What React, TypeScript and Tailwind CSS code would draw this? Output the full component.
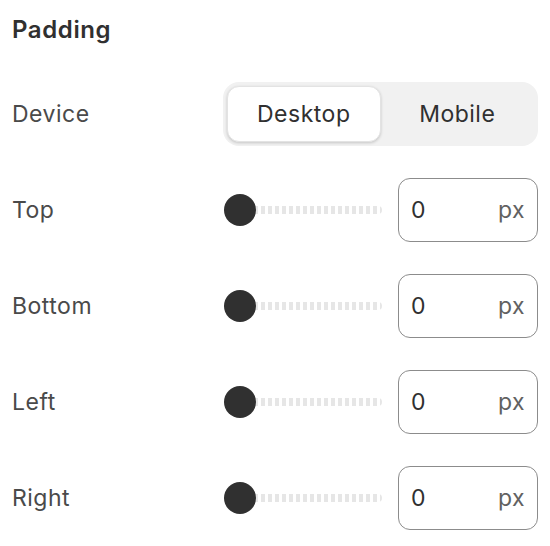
import { useState } from 'react';

const sides = ['Top', 'Bottom', 'Left', 'Right'];

function PaddingRow({ label }: { label: string }) {
  const [value, setValue] = useState('0');

  return (
    <div className="flex items-center h-16">
      <span className="w-[212px] text-[23px] tracking-[0.5px] text-[#4a4a4a]">{label}</span>
      {/* Slider */}
      <div className="relative flex items-center w-[158px] h-8">
        <div className="absolute left-4 right-0 h-2 rounded-full bg-[repeating-linear-gradient(90deg,#e6e6e6_0_4.5px,transparent_4.5px_7px)]" />
        <div className="relative w-8 h-8 rounded-full bg-[#303030]" />
      </div>
      {/* Value input */}
      <div className="ml-4 flex items-center w-[140px] h-16 px-3 rounded-xl border border-[#8c8c8c] bg-white">
        <input
          type="text"
          value={value}
          onChange={(e) => setValue(e.target.value)}
          className="w-full min-w-0 bg-transparent text-[23px] text-[#303030] focus:outline-none"
        />
        <span className="text-[23px] tracking-[0.5px] text-[#616161]">px</span>
      </div>
    </div>
  );
}

export default function App() {
  const [device, setDevice] = useState<'desktop' | 'mobile'>('desktop');

  return (
    <div className="min-h-screen bg-white px-3 pt-4 font-['Inter','Liberation_Sans',sans-serif]">
      <h2 className="text-[24px] leading-7 tracking-[0.6px] font-semibold text-[#303030]">Padding</h2>

      <div className="mt-[38px] flex flex-col gap-8">
        {/* Device toggle */}
        <div className="flex items-center h-16">
          <span className="w-[211px] text-[23px] tracking-[0.5px] text-[#4a4a4a]">Device</span>
          <div className="grid grid-cols-2 w-[315px] h-16 p-1 rounded-2xl bg-[#f1f1f1]">
            <button
              onClick={() => setDevice('desktop')}
              className={
                device === 'desktop'
                  ? 'rounded-xl bg-white text-[23px] tracking-[0.5px] text-[#303030] shadow-[0_1px_3px_rgba(0,0,0,0.18)] border border-[#e3e3e3]'
                  : 'rounded-xl text-[23px] tracking-[0.5px] text-[#303030]'
              }
            >
              Desktop
            </button>
            <button
              onClick={() => setDevice('mobile')}
              className={
                device === 'mobile'
                  ? 'rounded-xl bg-white text-[23px] tracking-[0.5px] text-[#303030] shadow-[0_1px_3px_rgba(0,0,0,0.18)] border border-[#e3e3e3]'
                  : 'rounded-xl text-[23px] tracking-[0.5px] text-[#303030]'
              }
            >
              Mobile
            </button>
          </div>
        </div>

        {sides.map((s) => (
          <PaddingRow key={s} label={s} />
        ))}
      </div>
    </div>
  );
}
